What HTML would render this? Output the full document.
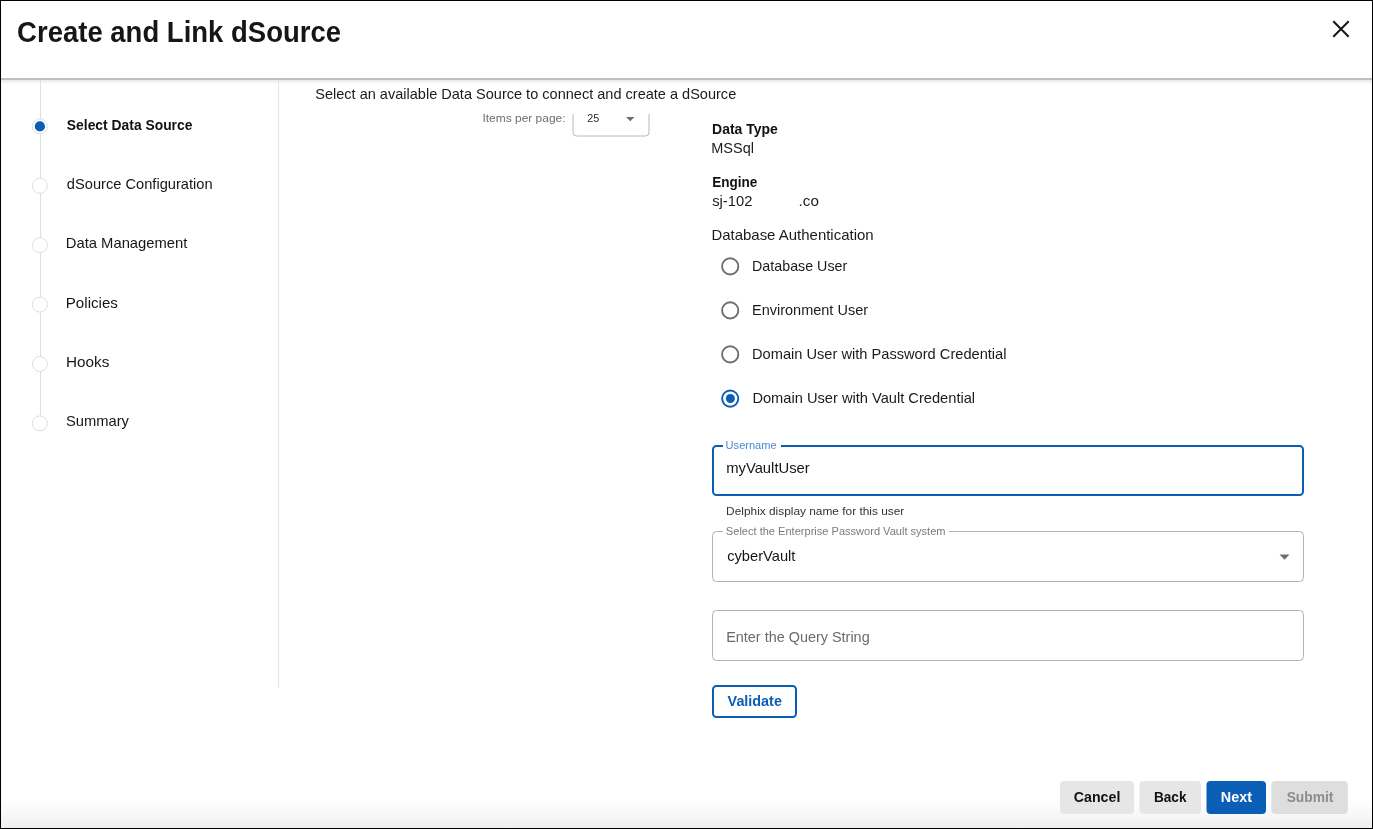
<!DOCTYPE html>
<html><head><meta charset="utf-8"><title>Create and Link dSource</title>
<style>
html,body{margin:0;padding:0;}
body{width:1373px;height:829px;position:relative;overflow:hidden;background:#fff;font-family:"Liberation Sans",sans-serif;}
.a{position:absolute;box-sizing:border-box;}
#frame{position:absolute;left:0;top:0;width:1373px;height:829px;box-sizing:border-box;border:1px solid #000;z-index:50;}
#tx{position:absolute;left:0;top:0;z-index:20;will-change:transform;font-family:"Liberation Sans",sans-serif;}
#hdrline{left:1px;top:78px;width:1371px;height:2px;background:#bfbfbf;z-index:5;}
#hdrshadow{left:1px;top:80px;width:1371px;height:4px;background:linear-gradient(#e8e8e8,rgba(255,255,255,0));z-index:5;}
#footshadow{left:1px;top:798px;width:1371px;height:30px;background:linear-gradient(rgba(239,239,239,0),rgba(239,239,239,0.45) 55%,#eeeeee);}
.vline{left:278px;top:80px;width:1px;height:608px;background:#e4e4e4;}
.sline{left:39px;top:80px;width:1.4px;height:336px;background:#dedede;}
.dot{width:16px;height:16px;border:1px solid #e2e2e2;border-radius:50%;background:#fff;left:31.7px;}
.dot.on::after{content:"";position:absolute;left:2.1px;top:2.1px;width:10px;height:10px;border-radius:50%;background:#0a5eb6;}
.radio{width:18px;height:18px;border:2px solid #6e6e6e;border-radius:50%;left:721.2px;}
.radio.on{border-color:#0a5eb6;}
.radio.on::after{content:"";position:absolute;left:2.5px;top:2.5px;width:9px;height:9px;border-radius:50%;background:#0a5eb6;}
.field{left:712px;width:592px;border:1px solid #b3b3b3;border-radius:4px;}
.gap{background:#fff;height:3px;}
.btn{top:781px;height:33px;border-radius:4px;background:#e6e6e6;}
</style></head><body>
<div class="a" id="hdrline"></div><div class="a" id="hdrshadow"></div>
<div class="a" id="footshadow"></div>
<svg class="a" id="sh" width="1373" height="829" viewBox="0 0 1373 829" style="left:0;top:0;z-index:10">
<path d="M1333.3 21.3L1348.7 36.7M1348.7 21.3L1333.3 36.7" stroke="#161616" stroke-width="2" fill="none"/>
<rect x="40" y="80" width="1" height="335.5" fill="#dedede"/>
<g fill="#fff" stroke="#e0e0e0" stroke-width="1">
<circle cx="39.9" cy="126.4" r="7.5"/>
<circle cx="39.9" cy="185.8" r="7.5"/>
<circle cx="39.9" cy="245.2" r="7.5"/>
<circle cx="39.9" cy="304.6" r="7.5"/>
<circle cx="39.9" cy="364.0" r="7.5"/>
<circle cx="39.9" cy="423.4" r="7.5"/>
</g>
<circle cx="39.9" cy="126.4" r="5.1" fill="#0a5eb6"/>
<rect x="278" y="80" width="1" height="608" fill="#e4e4e4"/>
<path d="M573 114V132.5A3.5 3.5 0 0 0 576.5 136H645.5A3.5 3.5 0 0 0 649 132.5V114" fill="none" stroke="#b8b8b8" stroke-width="1"/>
<path d="M626 117H634.5L630.25 121.3Z" fill="#6f6f6f"/>
<g fill="none" stroke="#6e6e6e" stroke-width="1.9">
<circle cx="730.2" cy="266.4" r="8.1"/>
<circle cx="730.2" cy="310.4" r="8.1"/>
<circle cx="730.2" cy="354.4" r="8.1"/>
</g>
<circle cx="730.2" cy="398.6" r="8.1" fill="none" stroke="#0a5eb6" stroke-width="1.9"/>
<circle cx="730.4" cy="398.5" r="4.5" fill="#0a5eb6"/>
<rect x="713" y="446" width="590" height="49" rx="3.5" fill="none" stroke="#0a5eb6" stroke-width="2"/>
<rect x="723" y="443" width="58" height="5" fill="#fff"/>
<rect x="712.5" y="531.5" width="591" height="50" rx="4" fill="none" stroke="#b3b3b3" stroke-width="1"/>
<rect x="723" y="529" width="226" height="5" fill="#fff"/>
<path d="M1279.5 554.6H1289.5L1284.5 559.7Z" fill="#6f6f6f"/>
<rect x="712.5" y="610.5" width="591" height="50" rx="4" fill="none" stroke="#b3b3b3" stroke-width="1"/>
<rect x="713" y="686" width="83" height="31" rx="3.5" fill="none" stroke="#0a5eb6" stroke-width="2"/>
<rect x="1060" y="781" width="74" height="33" rx="4" fill="#e6e6e6"/>
<rect x="1139.5" y="781" width="61.5" height="33" rx="4" fill="#e6e6e6"/>
<rect x="1206.5" y="781" width="59.5" height="33" rx="4" fill="#0a5eb6"/>
<rect x="1271.3" y="781" width="76.5" height="33" rx="4" fill="#dedede"/>
</svg>
<svg id="tx" width="1373" height="829" viewBox="0 0 1373 829"><text x="17.09" y="42.30" font-size="30.3" font-weight="bold" fill="#161616" textLength="323.95" lengthAdjust="spacingAndGlyphs">Create and Link dSource</text>
<text x="66.87" y="129.60" font-size="15" font-weight="bold" fill="#111111" textLength="125.57" lengthAdjust="spacingAndGlyphs">Select Data Source</text>
<text x="66.82" y="189.00" font-size="15" font-weight="normal" fill="#161616" textLength="145.82" lengthAdjust="spacingAndGlyphs">dSource Configuration</text>
<text x="65.81" y="248.30" font-size="15" font-weight="normal" fill="#161616" textLength="121.59" lengthAdjust="spacingAndGlyphs">Data Management</text>
<text x="65.79" y="307.50" font-size="15" font-weight="normal" fill="#161616" textLength="52.10" lengthAdjust="spacingAndGlyphs">Policies</text>
<text x="65.98" y="367.00" font-size="15" font-weight="normal" fill="#161616" textLength="43.37" lengthAdjust="spacingAndGlyphs">Hooks</text>
<text x="66.02" y="426.20" font-size="15" font-weight="normal" fill="#161616" textLength="62.97" lengthAdjust="spacingAndGlyphs">Summary</text>
<text x="315.23" y="98.60" font-size="15" font-weight="normal" fill="#1b1b1b" textLength="421.01" lengthAdjust="spacingAndGlyphs">Select an available Data Source to connect and create a dSource</text>
<text x="482.49" y="122.00" font-size="10.8" font-weight="normal" fill="#6e6e6e" textLength="83.05" lengthAdjust="spacingAndGlyphs">Items per page:</text>
<text x="587.16" y="122.00" font-size="11.5" font-weight="normal" fill="#2c2c2c" textLength="12.05" lengthAdjust="spacingAndGlyphs">25</text>
<text x="712.07" y="134.00" font-size="15" font-weight="bold" fill="#111111" textLength="65.67" lengthAdjust="spacingAndGlyphs">Data Type</text>
<text x="711.23" y="153.00" font-size="15" font-weight="normal" fill="#1b1b1b" textLength="42.72" lengthAdjust="spacingAndGlyphs">MSSql</text>
<text x="712.29" y="186.60" font-size="15" font-weight="bold" fill="#111111" textLength="45.13" lengthAdjust="spacingAndGlyphs">Engine</text>
<text x="712.20" y="205.50" font-size="15" font-weight="normal" fill="#1b1b1b" textLength="40.27" lengthAdjust="spacingAndGlyphs">sj-102</text>
<text x="798.58" y="205.50" font-size="15" font-weight="normal" fill="#1b1b1b" textLength="20.26" lengthAdjust="spacingAndGlyphs">.co</text>
<text x="711.40" y="239.90" font-size="15" font-weight="normal" fill="#1b1b1b" textLength="162.23" lengthAdjust="spacingAndGlyphs">Database Authentication</text>
<text x="752.05" y="271.00" font-size="15" font-weight="normal" fill="#1b1b1b" textLength="95.21" lengthAdjust="spacingAndGlyphs">Database User</text>
<text x="752.03" y="315.10" font-size="15" font-weight="normal" fill="#1b1b1b" textLength="116.02" lengthAdjust="spacingAndGlyphs">Environment User</text>
<text x="752.02" y="359.20" font-size="15" font-weight="normal" fill="#1b1b1b" textLength="254.49" lengthAdjust="spacingAndGlyphs">Domain User with Password Credential</text>
<text x="752.42" y="403.00" font-size="15" font-weight="normal" fill="#1b1b1b" textLength="222.71" lengthAdjust="spacingAndGlyphs">Domain User with Vault Credential</text>
<text x="725.63" y="448.60" font-size="10.3" font-weight="normal" fill="#4d88d2" textLength="51.01" lengthAdjust="spacingAndGlyphs">Username</text>
<text x="726.18" y="473.20" font-size="14.5" font-weight="normal" fill="#161616" textLength="83.55" lengthAdjust="spacingAndGlyphs">myVaultUser</text>
<text x="726.14" y="514.60" font-size="11.2" font-weight="normal" fill="#333" textLength="178.15" lengthAdjust="spacingAndGlyphs">Delphix display name for this user</text>
<text x="725.88" y="534.90" font-size="10.8" font-weight="normal" fill="#7a7a7a" textLength="219.68" lengthAdjust="spacingAndGlyphs">Select the Enterprise Password Vault system</text>
<text x="727.18" y="561.10" font-size="14.5" font-weight="normal" fill="#161616" textLength="68.26" lengthAdjust="spacingAndGlyphs">cyberVault</text>
<text x="726.20" y="641.90" font-size="14.5" font-weight="normal" fill="#6b6b6b" textLength="143.46" lengthAdjust="spacingAndGlyphs">Enter the Query String</text>
<text x="727.60" y="706.10" font-size="15" font-weight="bold" fill="#0a5eb6" textLength="54.28" lengthAdjust="spacingAndGlyphs">Validate</text>
<text x="1073.85" y="801.80" font-size="15" font-weight="bold" fill="#111111" textLength="46.49" lengthAdjust="spacingAndGlyphs">Cancel</text>
<text x="1153.88" y="801.80" font-size="15" font-weight="bold" fill="#111111" textLength="32.59" lengthAdjust="spacingAndGlyphs">Back</text>
<text x="1220.83" y="802.00" font-size="15" font-weight="bold" fill="#ffffff" textLength="31.08" lengthAdjust="spacingAndGlyphs">Next</text>
<text x="1286.66" y="802.00" font-size="15" font-weight="bold" fill="#8c8c8c" textLength="46.80" lengthAdjust="spacingAndGlyphs">Submit</text></svg>
<div id="frame"></div>
</body></html>
